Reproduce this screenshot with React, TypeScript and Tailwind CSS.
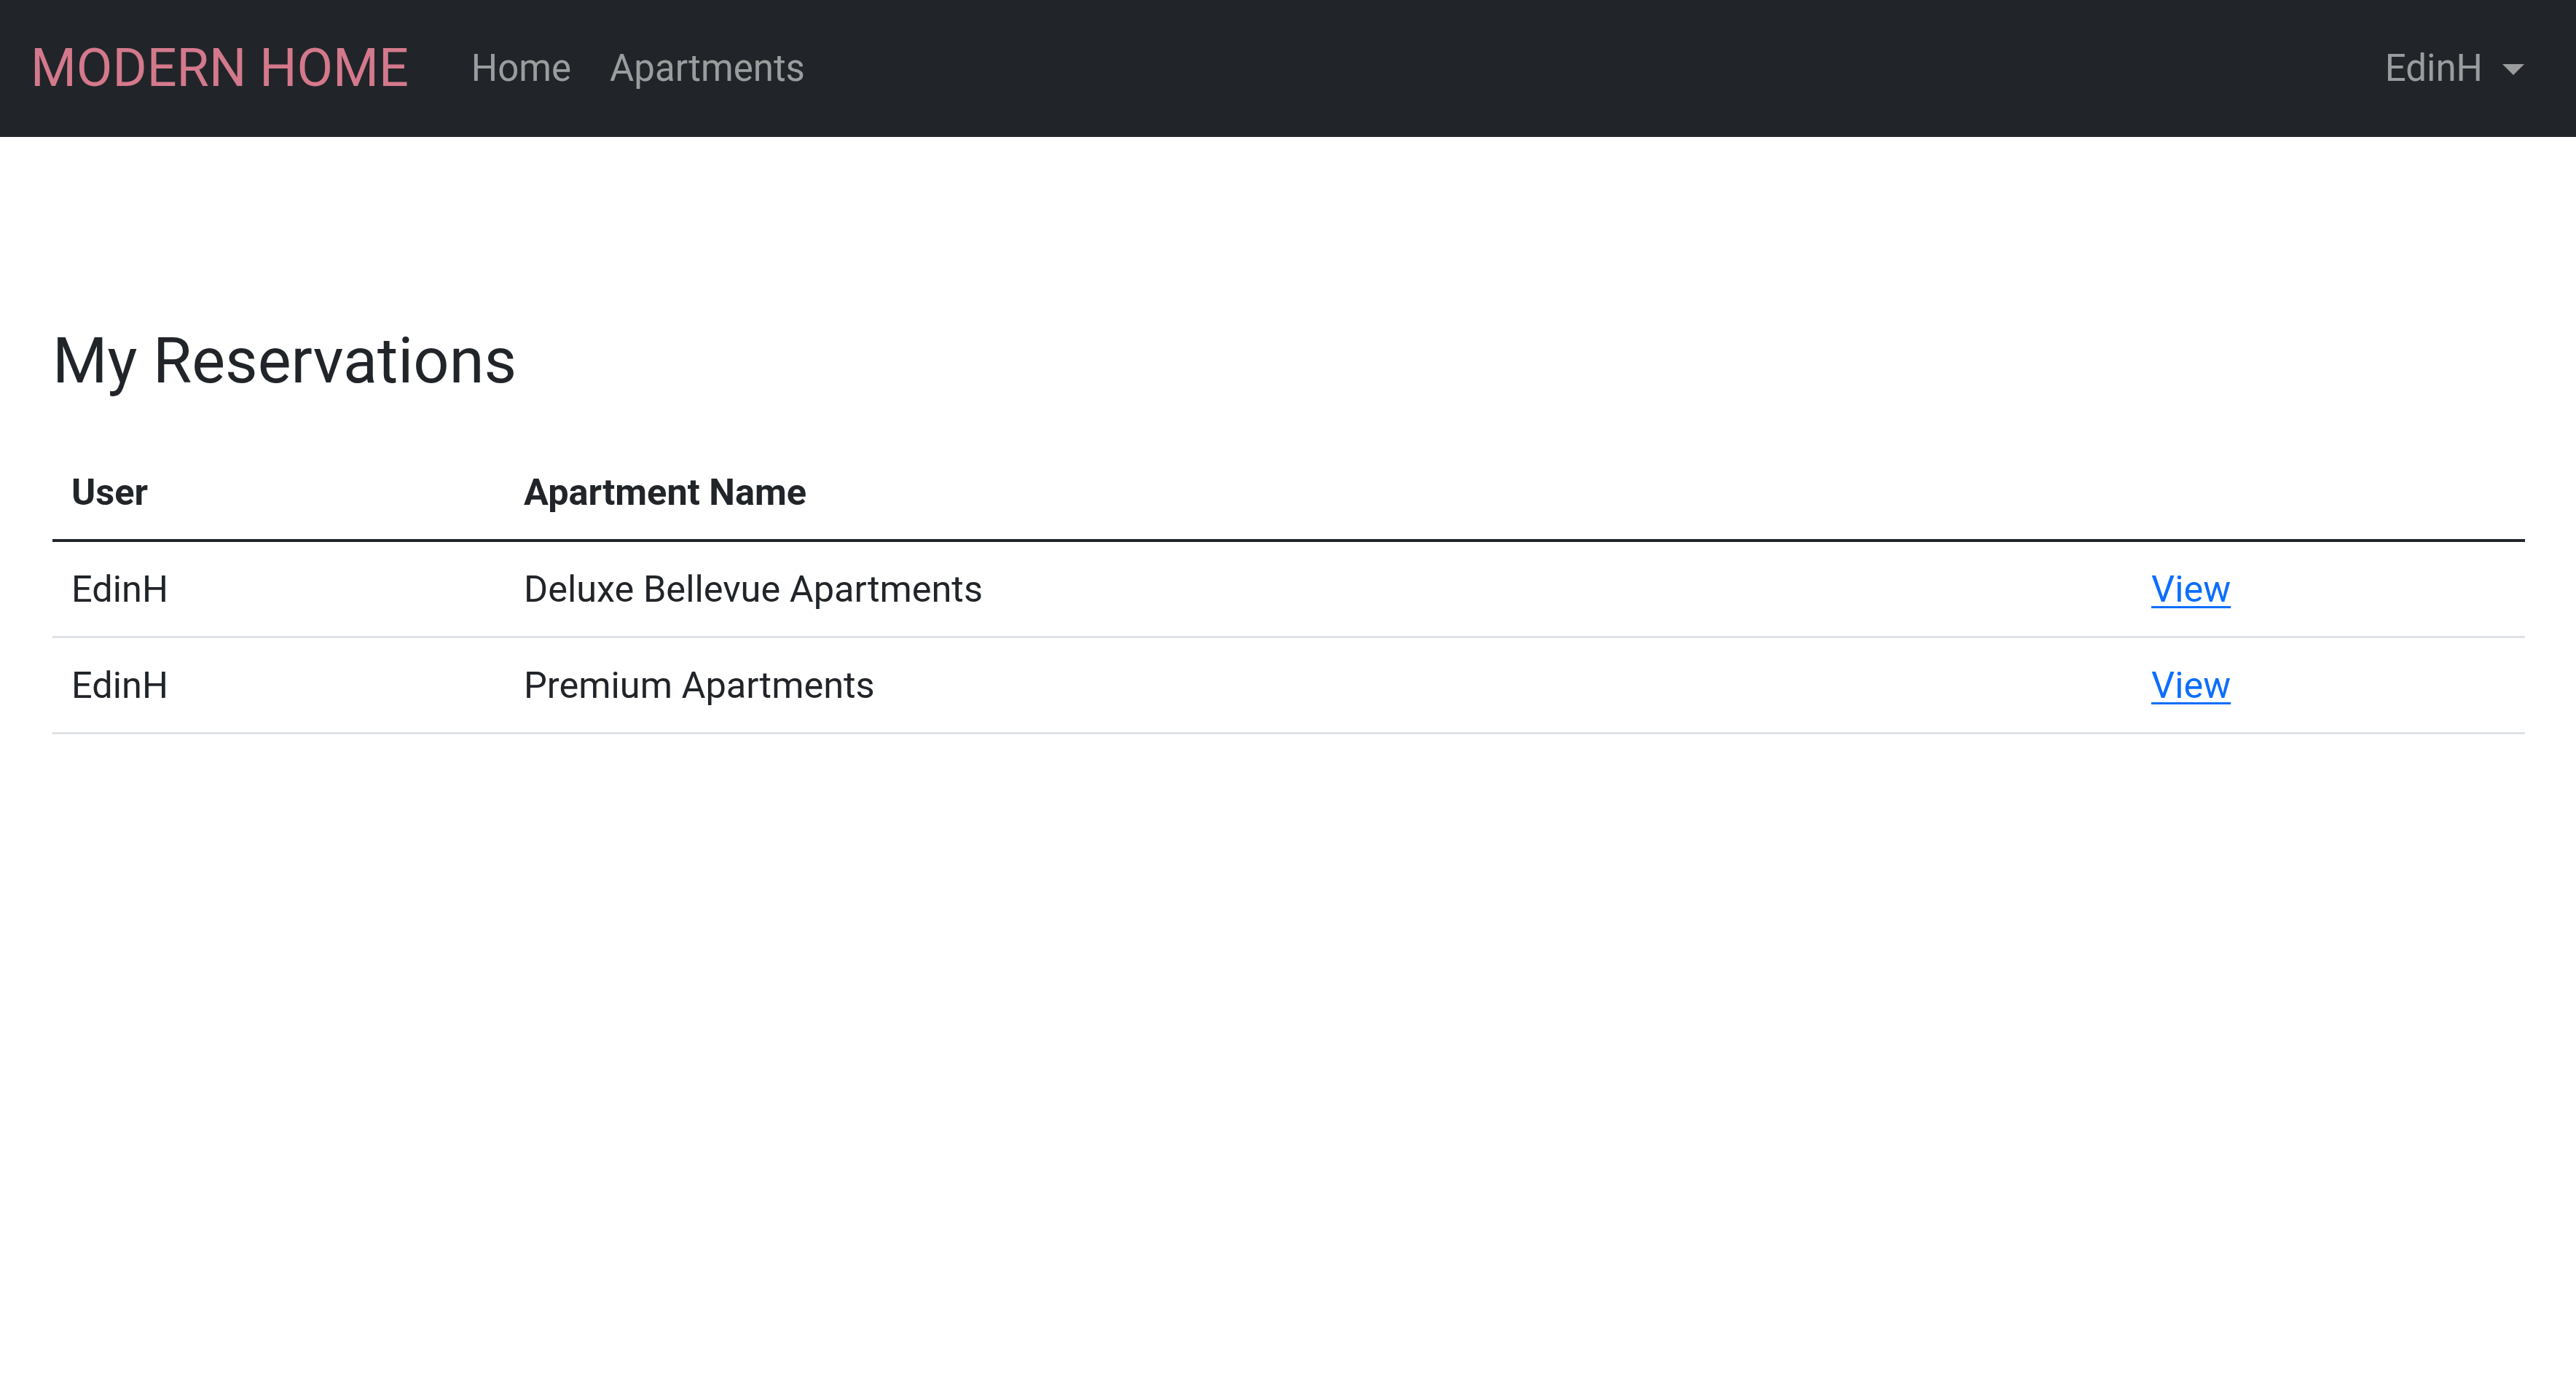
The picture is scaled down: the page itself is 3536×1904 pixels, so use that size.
import React from "react";

interface Reservation {
  user: string;
  apartment: string;
}

const reservations: Reservation[] = [
  { user: "EdinH", apartment: "Deluxe Bellevue Apartments" },
  { user: "EdinH", apartment: "Premium Apartments" },
];

/*** top navigation bar ***/
function Navbar() {
  return (
    <nav className="flex h-[188px] items-center justify-between bg-[#212529] pl-[42px] pr-[71px]">
      <div className="flex items-center">
        <a href="#" className="mr-[86px] text-[72px] leading-[1.2] text-[#d4798c] no-underline">
          MODERN HOME
        </a>
        <div className="flex items-center gap-[53px] text-[51px] leading-[1.5] text-[rgba(255,255,255,0.55)]">
          <a href="#">Home</a>
          <a href="#">Apartments</a>
        </div>
      </div>
      <button
        type="button"
        className="flex items-center text-[51px] leading-[1.5] text-[rgba(255,255,255,0.55)]"
      >
        EdinH
        <span className="ml-[27px] mt-[2px] h-0 w-0 border-x-[15px] border-t-[15px] border-x-transparent border-t-[rgba(255,255,255,0.55)]" />
      </button>
    </nav>
  );
}

/*** reservations table ***/
function ReservationTable() {
  return (
    <table className="mt-[2px] w-full border-collapse text-left text-[50.5px] leading-[77px] text-[#212529]">
      <thead>
        <tr className="border-b-4 border-[#212529]">
          <th className="w-[621px] px-[26px] py-[26px] font-bold">User</th>
          <th className="w-[2234px] px-[26px] py-[26px] font-bold">Apartment Name</th>
          <th className="px-[26px] py-[26px]" />
        </tr>
      </thead>
      <tbody>
        {reservations.map((r, i) => (
          <tr key={i} className="border-b-[3px] border-[#dee2e6]">
            <td className="px-[26px] py-[26px]">{r.user}</td>
            <td className="px-[26px] py-[26px]">{r.apartment}</td>
            <td className="px-[26px] py-[26px]">
              <a href="#" className="text-[#0d6efd] underline decoration-[3px] underline-offset-[6px]">
                View
              </a>
            </td>
          </tr>
        ))}
      </tbody>
    </table>
  );
}

export default function App() {
  return (
    <div className="min-h-screen bg-white font-['Roboto','Liberation_Sans',sans-serif]">
      <Navbar />
      <main className="px-[72px] pr-[70px] pt-[256px]">
        <h3 className="mb-[63px] text-[86.5px] font-normal leading-[1.2] text-[#212529]">My Reservations</h3>
        <ReservationTable />
      </main>
    </div>
  );
}
